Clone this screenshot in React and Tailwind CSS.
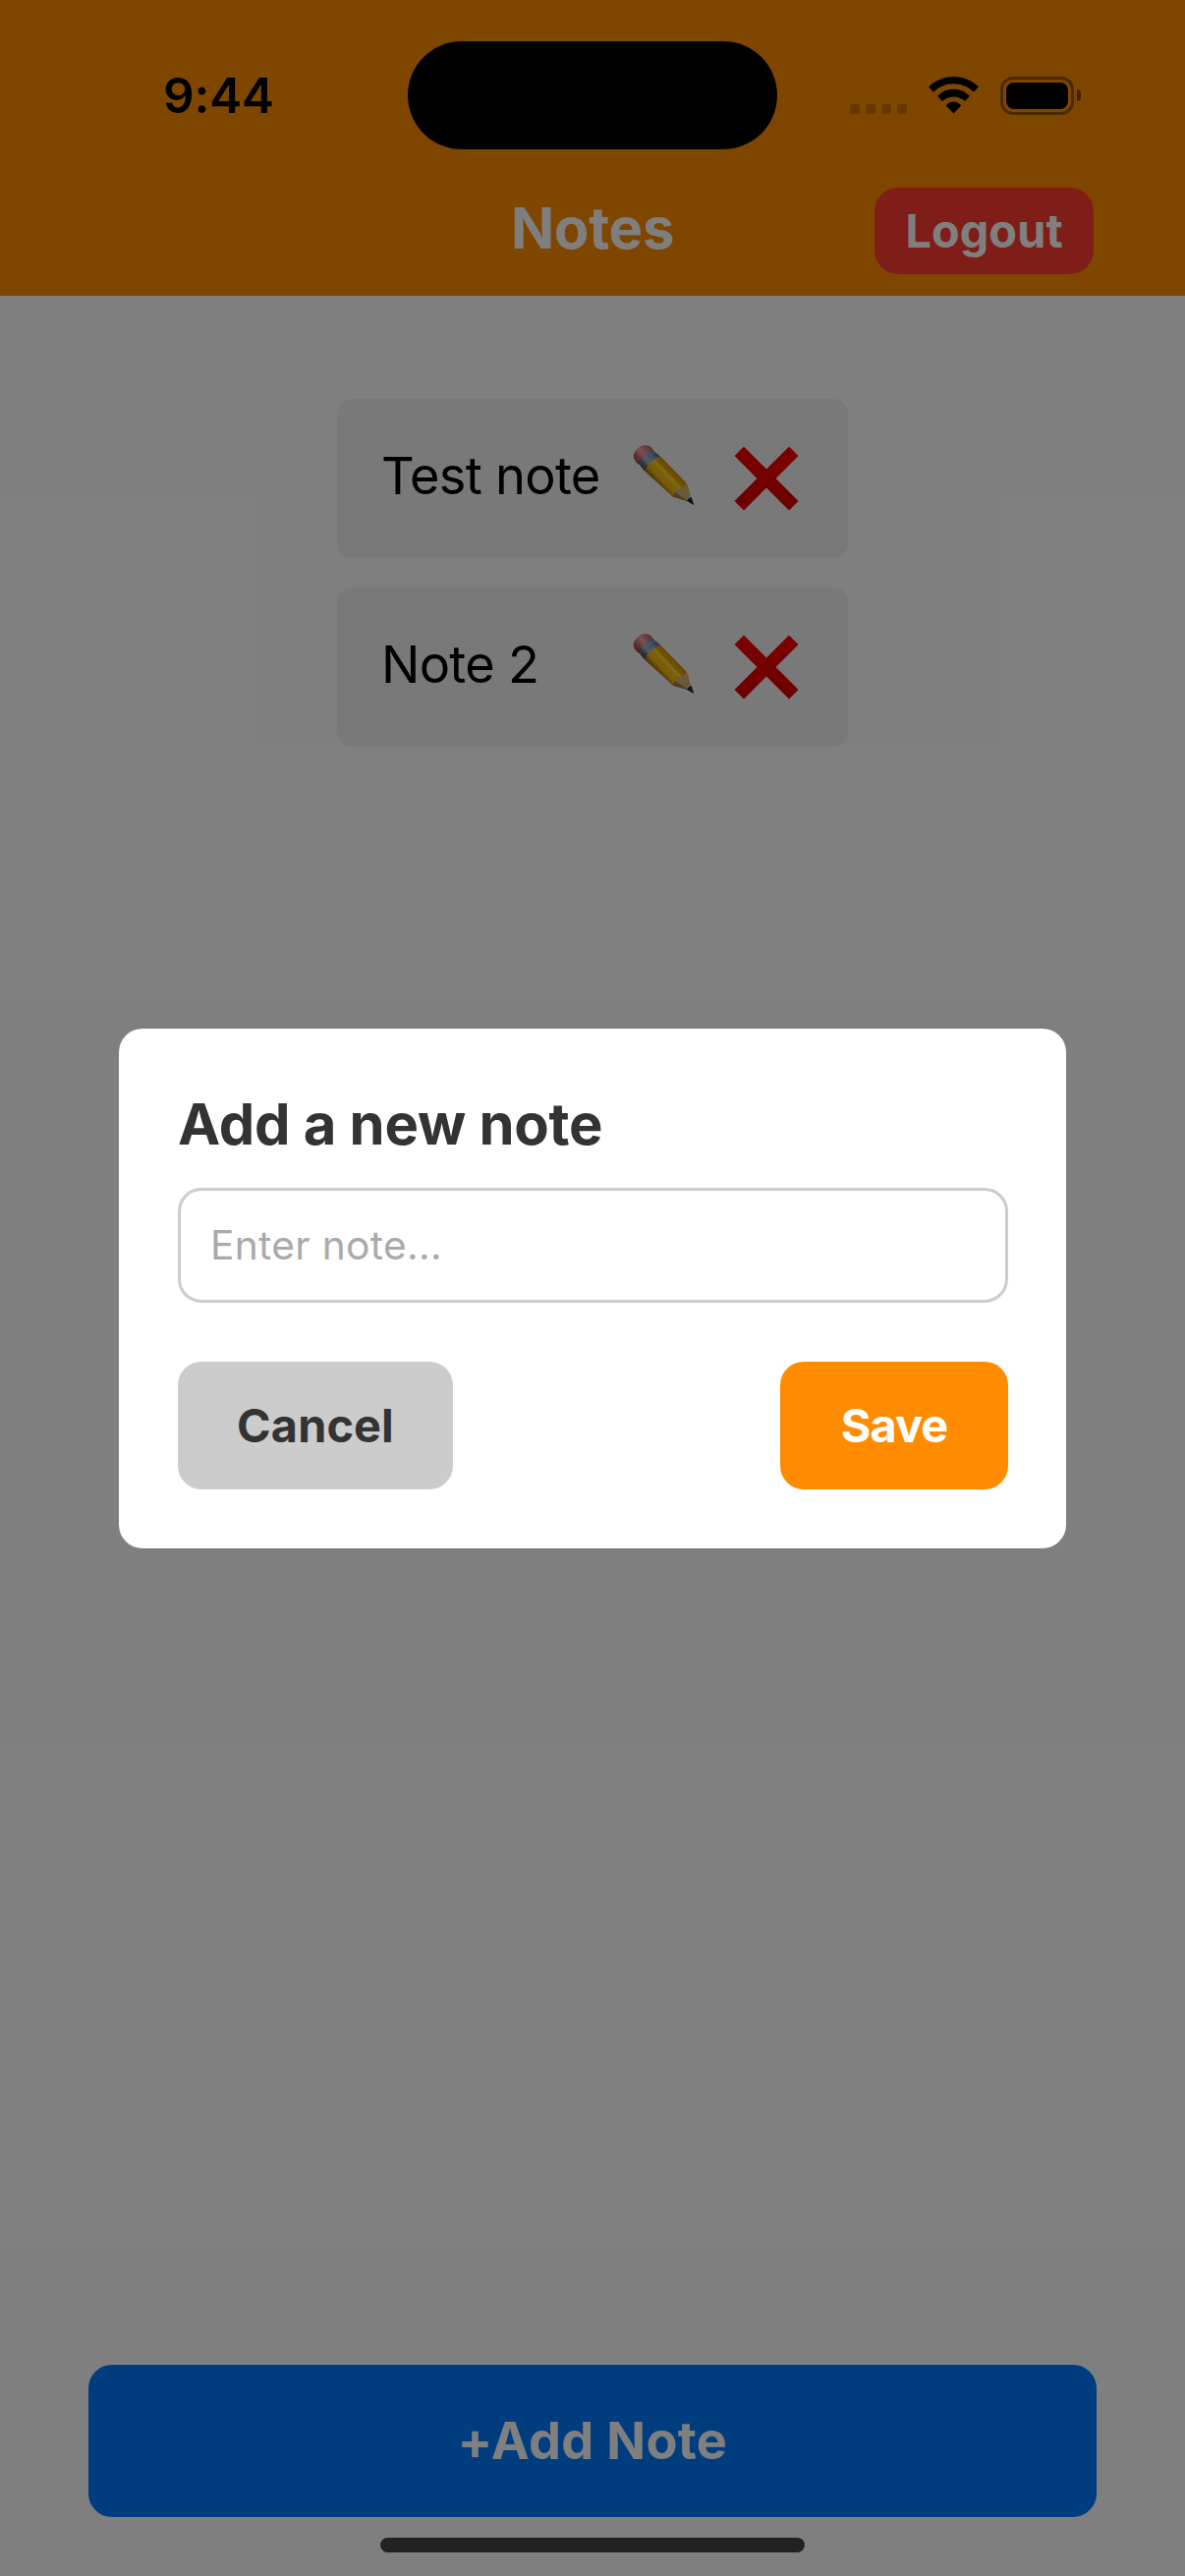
function Pencil() {
  return (
    <svg viewBox="0 0 216 222" className="mb-[7px] h-[74px] w-[72px] shrink-0">
      <defs>
        <linearGradient id="eraser" x1="24" y1="60" x2="66" y2="22" gradientUnits="userSpaceOnUse">
          <stop offset="0" stopColor="#b04c56" />
          <stop offset="0.45" stopColor="#f8a0a4" />
          <stop offset="1" stopColor="#b45c64" />
        </linearGradient>
        <linearGradient id="ferrule" x1="34" y1="92" x2="84" y2="46" gradientUnits="userSpaceOnUse">
          <stop offset="0" stopColor="#3c3c3c" />
          <stop offset="0.3" stopColor="#6a6a6c" />
          <stop offset="0.45" stopColor="#a5b2c4" />
          <stop offset="0.75" stopColor="#8ba3c2" />
          <stop offset="1" stopColor="#56708f" />
        </linearGradient>
        <linearGradient id="barrel" x1="90" y1="138" x2="142" y2="90" gradientUnits="userSpaceOnUse">
          <stop offset="0" stopColor="#9a7010" />
          <stop offset="0.12" stopColor="#c8940c" />
          <stop offset="0.2" stopColor="#eeb40c" />
          <stop offset="0.48" stopColor="#f8c410" />
          <stop offset="0.55" stopColor="#ffdc48" />
          <stop offset="0.64" stopColor="#e4a800" />
          <stop offset="1" stopColor="#c08400" />
        </linearGradient>
      </defs>
      <g transform="translate(-3 0) scale(1.02 1)">
        <path d="M32 80 C19 70 13 58 20 43 C28 27 43 19 56 22 C67 24 74 31 77 39 Z" fill="url(#eraser)" />
        <path d="M30 76 C37 60 54 44 75 37 L98 56 C77 64 60 79 51 101 Z" fill="url(#ferrule)" />
        <path d="M36 84 C44 66 60 51 82 44" fill="none" stroke="#c3ccd8" strokeWidth="2" opacity="0.6" />
        <path d="M51 101 C60 79 77 64 98 56 L174 136 L184 158 L152 180 L136 180 Z" fill="url(#barrel)" />
        <path d="M134 179 L145 156 C149 150 155 151 160 156 C164 152 168 144 176 139 L188 176 L176 190 Z" fill="#d6b377" />
        <path d="M134 179 L141 165 L180 192 L176 192 Z" fill="#a27c43" />
        <path d="M176 191 C180 185 184 181 190 179 L198 205 Z" fill="#27272b" />
      </g>
    </svg>
  );
}

function Cross() {
  return (
    <svg viewBox="0 0 66 66" className="h-[66px] w-[66px] shrink-0">
      <defs>
        <linearGradient id="cross" x1="0" y1="0" x2="0" y2="1">
          <stop offset="0" stopColor="#fa0000" />
          <stop offset="1" stopColor="#d80000" />
        </linearGradient>
      </defs>
      <path
        d="M10 0.5 L33 23.4 L56 0.5 L65.5 10 L42.6 33 L65.5 56 L56 65.5 L33 42.6 L10 65.5 L0.5 56 L23.4 33 L0.5 10 Z"
        fill="url(#cross)"
      />
    </svg>
  );
}

function Wifi() {
  return (
    <svg viewBox="0 0 152 112" className="h-[37.5px] w-[51px]">
      <path d="M76 0 C104 0 132 11 152 31 L137 47 C120 31 99 22 76 22 C53 22 32 31 15 47 L0 31 C20 11 48 0 76 0 Z" />
      <path d="M76 38 C95 38 112 45 125 59 L111 75 C101 66 89 61 76 61 C63 61 51 66 41 75 L27 59 C40 45 57 38 76 38 Z" />
      <path d="M76 76 C85 76 93 80 99 88 L76 112 L53 88 C59 80 67 76 76 76 Z" />
    </svg>
  );
}

function StatusBar() {
  return (
    <div className="flex h-44 items-center pt-[18px]">
      <div className="w-[415px] pl-[166px] text-[49.5px] leading-[60px] font-semibold tracking-[-0.14px]">9:44</div>
      <div className="h-[110px] w-[376px] rounded-[55px] bg-black" />
      <div className="ml-[74px] flex gap-1.5 pt-7">
        {[0, 1, 2, 3].map((i) => (
          <div key={i} className="size-2.5 rounded-[3px] bg-black/20" />
        ))}
      </div>
      <div className="ml-[22px]">
        <Wifi />
      </div>
      <div className="ml-[22px] flex h-[39px] w-[75px] rounded-[13px] border-3 border-black/40 p-[3px]">
        <div className="flex-1 rounded-[8px] bg-black" />
      </div>
      <div className="ml-[3px] h-3 w-1 rounded-r-full bg-black/50" />
    </div>
  );
}

function Note({ text }) {
  return (
    <div className="flex h-[162px] items-center rounded-[15px] bg-[#f3f3f3] pb-px pl-[45px] text-[52.3px] text-black">
      <span className="w-[252px] pb-1.5 leading-[64px] tracking-[-0.7px] whitespace-nowrap">{text}</span>
      <Pencil />
      <div className="ml-[35px]">
        <Cross />
      </div>
    </div>
  );
}

export default function App() {
  return (
    <div className="relative flex h-[2622px] w-[1206px] flex-col bg-white font-['Inter',sans-serif] text-black">
      <header className="h-[301px] bg-[#ff8c00]">
        <StatusBar />
        <div className="grid h-[118px] grid-cols-[1fr_auto_1fr] items-center text-white">
          <div />
          <h1 className="mb-1.5 text-[58px] leading-[70px] font-bold tracking-[-0.25px]">Notes</h1>
          <button className="mr-[93px] h-[88px] w-[223px] justify-self-end rounded-3xl bg-[#ff3b30] text-[46.8px] font-bold tracking-[0.09px]">
            Logout
          </button>
        </div>
      </header>

      <main className="mt-[105px] flex w-[520px] flex-1 flex-col gap-[30px] self-center">
        <Note text="Test note" />
        <Note text="Note 2" />
      </main>

      <footer className="flex flex-col items-center pb-6">
        <button className="h-[155px] w-[1026px] rounded-3xl bg-[#007bff] text-[52.3px] font-bold tracking-[0.32px] text-white">
          +Add Note
        </button>
        <div className="mt-[21px] h-[15px] w-[432px] rounded-full bg-[#444]" />
      </footer>

      <div className="absolute inset-0 flex items-center justify-center bg-black/50 pt-px">
        <div className="h-[529px] w-[964px] rounded-3xl bg-white pt-[61px] pr-[59px] pl-[60px]">
          <h2 className="text-[58px] leading-[72px] font-bold tracking-[-0.27px] text-[#333]">Add a new note</h2>
          <input
            placeholder="Enter note..."
            className="mt-[29px] block h-[117px] w-full rounded-3xl border-3 border-[#ccc] px-[30px] text-[40.7px] tracking-[0.3px] placeholder:text-[#aaa]"
          />
          <div className="mt-[60px] flex justify-between text-[46.8px] font-bold">
            <button className="h-[130px] w-[280px] rounded-3xl bg-[#ccc] tracking-[0.13px] text-[#333]">Cancel</button>
            <button className="h-[130px] w-[232px] rounded-3xl bg-[#ff8c00] tracking-[-0.9px] text-white">Save</button>
          </div>
        </div>
      </div>
    </div>
  );
}
